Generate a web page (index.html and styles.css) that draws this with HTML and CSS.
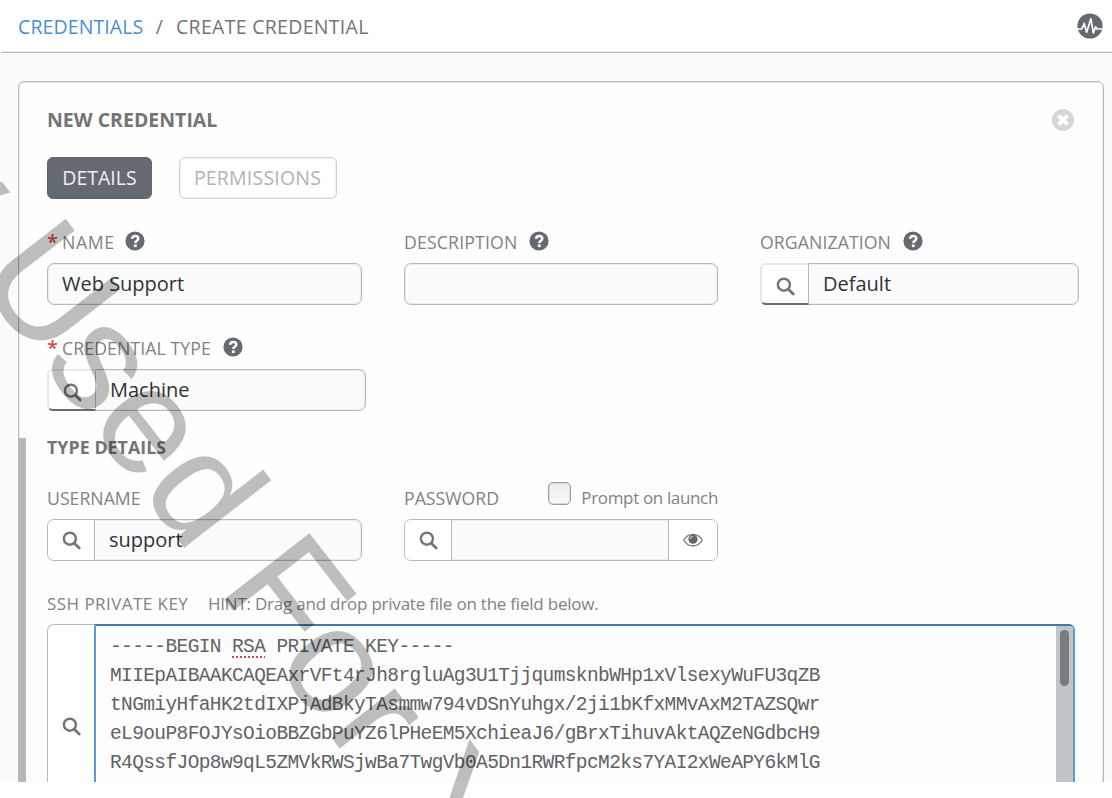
FILE: index.html
```html
<!DOCTYPE html>
<html lang="en">
<head>
<meta charset="utf-8">
<title>Create Credential</title>
<link rel="stylesheet" href="styles.css">
</head>
<body>
<svg class="defs" width="0" height="0" aria-hidden="true">
  <symbol id="search" viewBox="0 0 19 19"><circle cx="7.9" cy="7.7" r="6" fill="none" stroke="currentColor" stroke-width="2.4"/><path d="M12.3 12.2L17.2 17" stroke="currentColor" stroke-width="2.8" stroke-linecap="round"/></symbol>
  <symbol id="help" viewBox="0 0 20 20"><circle cx="10" cy="10" r="9.6" fill="currentColor"/><path d="M6.9 7.7C7.3 5.6 8.6 4.9 10.1 4.9C12 4.9 13.3 5.9 13.3 7.5C13.3 9.8 10.3 9.8 10.3 12.1" fill="none" stroke="#fff" stroke-width="2.5"/><rect x="8.9" y="13.4" width="2.8" height="2.7" fill="#fff"/></symbol>
</svg>
<div class="app">
  <header class="topbar">
    <nav class="crumbs"><a class="crumb-link">CREDENTIALS</a><span class="slash">/</span><span class="crumb-here">CREATE CREDENTIAL</span></nav>
    <svg class="activity" viewBox="0 0 26 26"><circle cx="13" cy="13" r="12.6" fill="#646972"/><path d="M.5 16H4.4L6.2 13.2L7.1 10.4L9.7 19.2L13.9 5.8L16.4 20L18.6 13.8L20 16H25.5" fill="none" stroke="#fff" stroke-width="1.7" stroke-linejoin="round"/></svg>
  </header>
  <main class="panel">
    <div class="panel-head">
      <h1 class="title">NEW CREDENTIAL</h1>
      <svg class="close" viewBox="0 0 22 22"><circle cx="11" cy="11" r="11" fill="#d7d7d7"/><path d="M7.9 7.9L14.1 14.1M14.1 7.9L7.9 14.1" stroke="#fff" stroke-width="3.9" stroke-linecap="square"/></svg>
    </div>
    <div class="tabs"><button class="tab tab-on">DETAILS</button><button class="tab tab-off">PERMISSIONS</button></div>
    <div class="row row-main">
      <div class="field">
        <div class="label"><span class="req">*</span><span class="l-name">NAME</span><svg class="help"><use href="#help"/></svg></div>
        <div class="input"><span class="value">Web Support</span></div>
      </div>
      <div class="field">
        <div class="label"><span class="l-desc">DESCRIPTION</span><svg class="help"><use href="#help"/></svg></div>
        <div class="input"></div>
      </div>
      <div class="field">
        <div class="label"><span class="l-org">ORGANIZATION</span><svg class="help"><use href="#help"/></svg></div>
        <div class="input lookup"><span class="addon raised"><svg class="search"><use href="#search"/></svg></span><span class="value">Default</span></div>
      </div>
    </div>
    <div class="row row-type">
      <div class="field">
        <div class="label"><span class="req">*</span><span class="l-type">CREDENTIAL TYPE</span><svg class="help"><use href="#help"/></svg></div>
        <div class="input lookup"><span class="addon raised"><svg class="search"><use href="#search"/></svg></span><span class="value">Machine</span></div>
      </div>
    </div>
    <section class="details">
      <h2 class="subtitle">TYPE DETAILS</h2>
      <div class="row row-login">
        <div class="field">
          <div class="label"><span class="l-user">USERNAME</span></div>
          <div class="input"><span class="addon"><svg class="search"><use href="#search"/></svg></span><span class="value">support</span></div>
        </div>
        <div class="field">
          <div class="label"><span class="l-pass">PASSWORD</span><span class="prompt"><i class="box"></i><span class="l-prompt">Prompt on launch</span></span></div>
          <div class="input"><span class="addon"><svg class="search"><use href="#search"/></svg></span><span class="value"></span><span class="addon addon-end"><svg class="eye" viewBox="0 0 20 14"><path d="M.8 7.2C5 -.6 15 -.6 19.2 7.2C15 14.6 5 14.6 .8 7.2Z" fill="none" stroke="#777" stroke-width="1.3"/><circle cx="10" cy="6.2" r="4.6" fill="#666"/><path d="M7.3 6A2.8 2.8 0 0 1 9.8 3.4" fill="none" stroke="#ddd" stroke-width="1"/></svg></span></div>
        </div>
      </div>
      <div class="label ssh-label"><span class="l-ssh">SSH PRIVATE KEY</span><span class="l-hint">HINT: Drag and drop private file on the field below.</span></div>
      <div class="keybox">
        <span class="addon key-addon"><svg class="search"><use href="#search"/></svg></span>
        <div class="key">
          <div class="keytext">
            <div><span>-----BEGIN </span><span class="typo">RSA</span><span> PRIVATE KEY-----</span></div>
            <div>MIIEpAIBAAKCAQEAxrVFt4rJh8rgluAg3U1TjjqumsknbWHp1xVlsexyWuFU3qZB</div>
            <div>tNGmiyHfaHK2tdIXPjAdBkyTAsmmw794vDSnYuhgx/2ji1bKfxMMvAxM2TAZSQwr</div>
            <div>eL9ouP8FOJYsOioBBZGbPuYZ6lPHeEM5XchieaJ6/gBrxTihuvAktAQZeNGdbcH9</div>
            <div>R4QssfJOp8w9qL5ZMVkRWSjwBa7TwgVb0A5Dn1RWRfpcM2ks7YAI2xWeAPY6kMlG</div>
          </div>
          <div class="scroll"><i class="thumb"></i></div>
        </div>
      </div>
    </section>
  </main>
</div>
<svg class="watermark" viewBox="0 0 1112 798"><text class="mark" transform="translate(-27 275.5) rotate(52.2)" x="-118.3" y="0">y <tspan class="cap">U</tspan><tspan dx="-3.6">sed </tspan><tspan class="cap">F</tspan><tspan dx="-3">or </tspan><tspan class="cap">Y</tspan></text></svg>
</body>
</html>
```
FILE: styles.css
```css
* { box-sizing: border-box; }
body { margin: 0; width: 1112px; height: 798px; overflow: hidden; position: relative; background: #fff; color: #747474; font-family: "Open Sans", "Noto Sans", sans-serif; }
.defs { display: block; height: 0; }
.app { height: 782px; margin-left: 1px; overflow: hidden; background: #fbfbfb; }
.topbar { height: 53px; background: #fff; border-bottom: 1px solid #b9b9b9; box-shadow: inset 0 -1px #ececec; display: flex; align-items: center; justify-content: space-between; padding: 1px 9px 0 17px; }
.crumbs { display: flex; font-size: 19.5px; line-height: 26px; white-space: pre; }
.crumb-link { color: #4a90cf; letter-spacing: .1px; }
.slash { margin: 0 13px 0 12.5px; }
.crumb-here { letter-spacing: .3px; }
.activity { width: 26px; height: 26px; margin-top: -2px; }
.panel { margin: 28px 8px 0 17px; height: 720px; border: 1px solid #b9b9b9; box-shadow: inset 0 0 0 1px #ececec; border-radius: 6px; background: #fefefe; padding: 1px 1px 1px 28px; }
.panel-head { height: 74px; display: flex; align-items: center; justify-content: space-between; padding-right: 28px; }
.title { margin: 0; font-size: 19.5px; line-height: 26px; font-weight: 700; }
.close { width: 22px; height: 22px; }
.tabs { display: flex; gap: 27px; }
.tab { height: 42px; border-radius: 6px; font: 19.5px/24px "Open Sans", "Noto Sans", sans-serif; padding: 0 0 1px; }
.tab-on { width: 105px; border: 1px solid #5f646e; background: #646972; color: #efefef; }
.tab-off { width: 158px; border: 1px solid #d0d0d0; box-shadow: inset 0 0 0 1px #f0f0f0; background: #fff; color: #b3b3b3; letter-spacing: .2px; padding-right: 1px; }
.row { display: flex; gap: 42px; }
.row .field { width: 315px; }
.row-main { margin-top: 27px; }
.row-main .field:nth-child(2), .row-login .field:nth-child(2) { width: 314px; }
.row-main .field:nth-child(3) { width: 319px; }
.row-type { margin-top: 27px; }
.row-type .field { width: 319px; }
.label { height: 37px; display: flex; align-items: center; font-size: 17.7px; line-height: 24px; white-space: pre; color: #828282; padding-bottom: 5px; }
.l-name { letter-spacing: .6px; }
.l-desc { letter-spacing: .15px; }
.l-org, .l-type { letter-spacing: .08px; }
.req { color: #dd4b45; width: 15px; font-size: 20px; font-weight: 600; }
.help { width: 20px; height: 20px; margin: -3px 0 0 12px; color: #646972; }
.l-name + .help { margin-left: 10px; }
.input { height: 42px; border: 1px solid #b9b9b9; box-shadow: inset 0 0 0 1px #ececec; border-radius: 7px; background: #fbfbfb; display: flex; }
.value { flex: 1; padding-left: 14px; font-size: 20px; line-height: 39px; color: #303338; white-space: pre; }
.addon { width: 47px; background: #fff; border-right: 1px solid #b9b9b9; border-radius: 6px 0 0 6px; display: flex; align-items: center; justify-content: center; color: #757575; }
.search { width: 19px; height: 19px; }
.lookup .raised { width: 49px; margin: -1px 0 -1px -1px; padding: 4px 0 0 1px; border: 2px solid #e8e8e8; border-right: 1px solid #b9b9b9; border-bottom: 2px solid #6b6b6b; border-radius: 6px 0 0 6px; }
.lookup .value { padding-left: 14px; }
.details { display: flow-root; margin: 27px 0 0 -29px; padding: 0 0 0 21px; border-left: 8px solid #b7b7b7; height: 360px; }
.subtitle { margin: -3px 0 0; font-size: 17.7px; line-height: 24px; font-weight: 700; letter-spacing: .1px; }
.row-login { margin-top: 22px; }
.row-login .label { height: 38px; padding-bottom: 4px; }
.row-login .input { height: 42px; }
.prompt { margin-left: auto; display: flex; align-items: center; gap: 10px; }
.l-prompt { font-size: 17px; letter-spacing: -.35px; }
.box { width: 23px; height: 23px; border: 1px solid #a09e9a; box-shadow: inset 0 0 0 1px #dcdbd9; border-radius: 5px; background: linear-gradient(#ededed, #fafafa); margin-top: -10px; }
.addon-end { border-right: 0; border-left: 1px solid #b9b9b9; width: 49px; border-radius: 0 6px 6px 0; }
.eye { width: 20px; height: 14px; }
.ssh-label { margin-top: 27px; height: 36px; padding-bottom: 4px; font-size: 17px; }
.l-ssh { width: 161px; letter-spacing: .45px; }
.l-hint { letter-spacing: -.22px; }
.keybox { width: 1028px; height: 200px; display: flex; }
.key-addon { width: 47px; border: 1px solid #b9b9b9; border-right: 0; border-radius: 7px 0 0 0; padding-top: 4px; }
.key { flex: 1; border: 2px solid #5a9bd2; border-top-color: #4678a8; border-radius: 0 6px 0 0; background: #fdfdfd; display: flex; justify-content: space-between; overflow: hidden; }
.keytext { margin: 7px 0 0 14px; font: 19.5px/29.1px "Liberation Mono", monospace; letter-spacing: -.61px; color: #606266; white-space: nowrap; }
.keytext span { white-space: pre; }
.typo { text-decoration: underline dotted #c94b50 2px; text-underline-offset: 4px; }
.scroll { width: 17px; background: #c2c5c6; padding: 4px 4px; }
.thumb { display: block; width: 9px; height: 56px; border-radius: 5px; background: #777c7f; }
.watermark { position: absolute; inset: 0; width: 1112px; height: 798px; pointer-events: none; }
.mark { font: 152px "Liberation Sans", Arial, sans-serif; fill: #000; fill-opacity: .25; white-space: pre; }
.cap { font-size: 157px; }
```
